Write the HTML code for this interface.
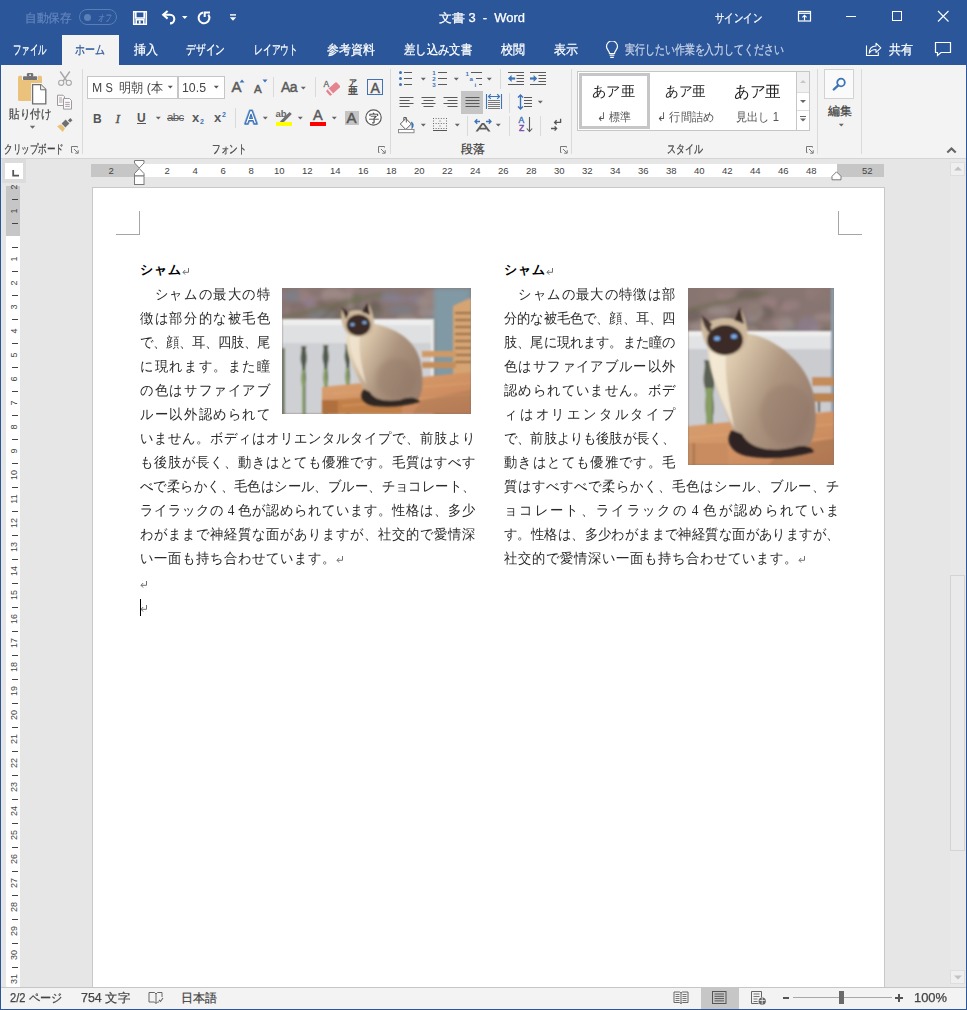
<!DOCTYPE html>
<html><head><meta charset="utf-8">
<style>
*{box-sizing:border-box;margin:0;padding:0}
html,body{width:967px;height:1010px;overflow:hidden;background:#e6e6e6;font-family:"Liberation Sans",sans-serif;color:#444}
.a{position:absolute}
#title{left:0;top:0;width:967px;height:65px;background:#2b579a}
#ribbon{left:0;top:65px;width:967px;height:94px;background:#f3f3f3;border-bottom:1px solid #d4d4d4}
.wt{color:#fff;font-size:12px;white-space:nowrap;line-height:14px}
.tab{color:#fff;font-size:12.5px;white-space:nowrap;line-height:14px;top:43px}
.lbl{font-size:12px;color:#444;white-space:nowrap;line-height:14px;top:142px}
.sep{background:#dadada;width:1px}
#page{left:92px;top:187px;width:793px;height:900px;background:#fff;border:1px solid #c6c6c6}
#status{left:0;top:987px;width:967px;height:23px;background:#f3f3f3;border-top:1px solid #c6c6c6}
.st{font-size:12px;color:#444;white-space:nowrap;line-height:14px;top:991px}
#bl{left:0;top:0;width:1px;height:1010px;background:#2b579a}
#br{left:966px;top:0;width:1px;height:1010px;background:#2b579a}
#bb{left:0;top:1009px;width:967px;height:1px;background:#2b579a}
.doc{font-family:"Liberation Serif",serif;font-size:13.6px;color:#222;white-space:nowrap;line-height:16px}
.rn{width:20px;text-align:center;font-size:9.5px;line-height:11px;color:#444}
.vn{width:20px;height:12px;text-align:center;font-size:9px;line-height:12px;color:#444;transform:rotate(-90deg)}
.dc{width:14px;text-align:center;font-family:"Liberation Serif",serif;font-size:14px;line-height:16px;color:#2a2a2a;white-space:nowrap;transform:scaleX(0.95)}
.dt{font-family:"Liberation Serif",serif;font-size:13px;line-height:16px;color:#000;font-weight:bold;letter-spacing:1px;white-space:nowrap}
.lbl,.tab,.wt,.st{-webkit-text-stroke:0.25px currentColor}
</style></head><body>
<div id="title" class="a"></div>
<div id="ribbon" class="a"></div>

<!-- title bar -->
<div class="a wt fit" style="left:24.5px;top:10.5px;color:#6283bb;--w:46.5px;transform-origin:0 0;transform:scaleX(0.9688)">自動保存</div>
<div class="a" style="left:79px;top:9px;width:38px;height:16px;border:1px solid #5a7db5;border-radius:8px"></div>
<div class="a" style="left:83.5px;top:13.5px;width:7px;height:7px;border-radius:4px;background:#5c7fb8"></div>
<div class="a fit" style="left:97.5px;top:12.5px;font-size:9.5px;line-height:10px;color:#6283bb;--w:13px;font-style:italic;-webkit-text-stroke:0.2px #6283bb;transform-origin:0 0;transform:scaleX(0.6500)">オフ</div>
<svg class="a" style="left:132px;top:10px" width="16" height="16" viewBox="0 0 16 16"><path d="M1.75 1.75h12.5v12.5H1.75z" fill="none" stroke="#fff" stroke-width="1.6"/><path d="M3.8 1.8v6.2h8.4V1.8" fill="none" stroke="#fff" stroke-width="1.6"/><path d="M4.2 14.2v-4.6h7.6v4.6" fill="none" stroke="#fff" stroke-width="1.6"/><rect x="6.8" y="10.6" width="1.8" height="3" fill="#fff"/></svg>
<svg class="a" style="left:161px;top:10px" width="16" height="15" viewBox="0 0 16 15"><path d="M2.2 4.8H9a4.3 4.3 0 0 1 0 8.6" fill="none" stroke="#fff" stroke-width="2.1"/><path d="M6.6 1L2.2 4.8l4.4 3.8" fill="none" stroke="#fff" stroke-width="2.1"/></svg>
<svg class="a" style="left:182px;top:15px" width="6" height="5" viewBox="0 0 6 5"><path d="M0 1h5.5L2.75 4z" fill="#fff"/></svg>
<svg class="a" style="left:196px;top:10px" width="16" height="15" viewBox="0 0 16 15"><path d="M7.2 2.5A5.4 5.4 0 1 0 12.3 4.6" fill="none" stroke="#fff" stroke-width="2"/><path d="M8.7 7V2.5H14" fill="none" stroke="#fff" stroke-width="2"/></svg>
<svg class="a" style="left:229px;top:13px" width="8" height="9" viewBox="0 0 8 9"><rect x="1" y="1.2" width="6" height="1.4" fill="#fff"/><path d="M0.8 4.2h6.4L4 7.8z" fill="#fff"/></svg>
<div class="a wt fit" style="left:439px;top:11px;--w:86px;transform-origin:0 0;transform:scaleX(1.0777)">文書 3&nbsp; - &nbsp;Word</div>
<div class="a wt fit" style="left:715px;top:11px;--w:47px;transform-origin:0 0;transform:scaleX(0.7833)">サインイン</div>
<svg class="a" style="left:797px;top:10px" width="15" height="12" viewBox="0 0 15 12"><rect x="1.5" y="1.5" width="12" height="9.5" fill="none" stroke="#fff" stroke-width="1.2"/><path d="M1.5 3.3h12" stroke="#fff" stroke-width="1.2"/><path d="M7.5 10.5V5.6M5.4 7.4l2.1-2 2.1 2" fill="none" stroke="#fff" stroke-width="1.2"/></svg>
<div class="a" style="left:846px;top:16px;width:10px;height:1px;background:#fff"></div>
<div class="a" style="left:892px;top:11px;width:10px;height:10px;border:1px solid #fff"></div>
<svg class="a" style="left:937px;top:10px" width="12" height="12" viewBox="0 0 12 12"><path d="M1 1l10.5 10.5M11.5 1L1 11.5" stroke="#fff" stroke-width="1.1"/></svg>
<!-- tabs -->
<div class="a" style="left:62px;top:35px;width:57px;height:30px;background:#f3f3f3"></div>
<div class="a tab fit" style="left:13px;--w:34px;transform-origin:0 0;transform:scaleX(0.6538)">ファイル</div>
<div class="a tab fit" style="left:75px;color:#2b579a;--w:30px;transform-origin:0 0;transform:scaleX(0.7692)">ホーム</div>
<div class="a tab fit" style="left:134px;--w:24px;transform-origin:0 0;transform:scaleX(0.9231)">挿入</div>
<div class="a tab fit" style="left:186px;--w:39px;transform-origin:0 0;transform:scaleX(0.7500)">デザイン</div>
<div class="a tab fit" style="left:254px;--w:44px;transform-origin:0 0;transform:scaleX(0.6769)">レイアウト</div>
<div class="a tab fit" style="left:327px;--w:48px;transform-origin:0 0;transform:scaleX(0.9231)">参考資料</div>
<div class="a tab fit" style="left:404px;--w:68px;transform-origin:0 0;transform:scaleX(0.8718)">差し込み文書</div>
<div class="a tab fit" style="left:501px;--w:24px;transform-origin:0 0;transform:scaleX(0.9231)">校閲</div>
<div class="a tab fit" style="left:554px;--w:24px;transform-origin:0 0;transform:scaleX(0.9231)">表示</div>
<svg class="a" style="left:605px;top:41px" width="14" height="18" viewBox="0 0 14 18"><path d="M4.5 12.5C4.5 10 1.5 8.5 1.5 5.5a5.5 5.5 0 0 1 11 0c0 3-3 4.5-3 7z" fill="none" stroke="#fff" stroke-width="1.2"/><path d="M4.6 14.2h4.8M5.2 16.3h3.6" stroke="#fff" stroke-width="1.2"/></svg>
<div class="a tab fit" style="left:625px;color:#c8d3e6;--w:159px;transform-origin:0 0;transform:scaleX(0.7644)">実行したい作業を入力してください</div>
<svg class="a" style="left:865px;top:41px" width="17" height="16" viewBox="0 0 17 16"><path d="M1.5 4.5v10h11.8v-3.2" fill="none" stroke="#fff" stroke-width="1.1"/><path d="M4.2 12.2C4.3 8 6.6 5.3 11 5.1V2.2l4.8 4.6-4.8 4.6V8.5C7.8 8.5 5.6 9.8 4.2 12.2z" fill="none" stroke="#fff" stroke-width="1.05" stroke-linejoin="round"/></svg>
<div class="a tab fit" style="left:889px;--w:24px;transform-origin:0 0;transform:scaleX(0.9231)">共有</div>
<svg class="a" style="left:934px;top:41px" width="18" height="16" viewBox="0 0 18 16"><path d="M1.5 1.5h15v10H7l-3.5 3v-3h-2z" fill="none" stroke="#fff" stroke-width="1.2"/></svg>

<!-- ribbon: clipboard -->
<svg class="a" style="left:16px;top:71px" width="32" height="34" viewBox="0 0 32 34">
 <rect x="2" y="4.8" width="24" height="25.2" rx="1.5" fill="#eac27b"/>
 <rect x="6" y="4" width="16" height="5" fill="#f3f3f3"/>
 <rect x="7" y="5.3" width="14.2" height="3.7" rx="0.8" fill="#737373"/>
 <rect x="10.9" y="2" width="6.3" height="4" rx="1.2" fill="#737373"/>
 <rect x="13.3" y="3.4" width="1.6" height="1.6" fill="#f3f3f3"/>
 <rect x="15" y="12" width="16" height="21" fill="#f3f3f3"/>
 <path d="M16.6 13.6h8.2l5 5v14.2H16.6z" fill="#fff" stroke="#6d6d6d" stroke-width="1.3"/>
 <path d="M24.6 13.6v5.2h5.2" fill="#f0f0f0" stroke="#6d6d6d" stroke-width="1"/>
</svg>
<div class="a lbl fit" style="left:9px;top:107px;color:#444;--w:42px;transform-origin:0 0;transform:scaleX(0.8750)">貼り付け</div>
<svg class="a" style="left:29px;top:125px" width="7" height="5" viewBox="0 0 7 5"><path d="M0.8 0.8h5.4L3.5 3.8z" fill="#6a6a6a"/></svg>
<svg class="a" style="left:57px;top:70px" width="16" height="17" viewBox="0 0 16 17">
 <path d="M3.2 1.5l6.6 9.5M12.8 1.5L6.2 11" stroke="#a8a8a8" stroke-width="1.4"/>
 <circle cx="4.2" cy="12.8" r="2.6" fill="none" stroke="#a8a8a8" stroke-width="1.1"/>
 <circle cx="11.8" cy="12.8" r="2.6" fill="none" stroke="#a8a8a8" stroke-width="1.1"/>
</svg>
<svg class="a" style="left:56px;top:94px" width="17" height="16" viewBox="0 0 17 16">
 <path d="M1.5 1.2h5.5l1.5 1.5v8.8H1.5z" fill="#fbf7fa" stroke="#9c9c9c" stroke-width="1"/>
 <path d="M3 4h3M3 6h3.5M3 8h3.5" stroke="#9c9c9c" stroke-width="0.9"/>
 <path d="M7.5 4.5h6l2 2v8.6h-8z" fill="#fbf7fa" stroke="#9c9c9c" stroke-width="1"/>
 <path d="M9.2 8.4h4.6M9.2 10.4h4.6M9.2 12.4h4.6" stroke="#9c9c9c" stroke-width="0.9"/>
</svg>
<svg class="a" style="left:56px;top:117px" width="18" height="16" viewBox="0 0 18 16">
 <path d="M16.5 3.2l-2.2-2.2-2.4 2.4 2.2 2.2z" fill="#707070"/>
 <path d="M13.4 6.4l-3.8-3.8-4 4 3.8 3.8z" fill="#707070"/>
 <path d="M5 7.2l4 4-2.2 3.8L1 9.2z" fill="#eac27b"/>
</svg>
<div class="a lbl fit" style="left:4px;top:142px;--w:60px;transform-origin:0 0;transform:scaleX(0.7143)">クリップボード</div>
<svg class="a" style="left:71px;top:146px" width="8" height="8" viewBox="0 0 8 8"><path d="M0.5 0.5h6v1M0.5 0.5v6h1" fill="none" stroke="#777" stroke-width="1"/><path d="M3 3l3.8 3.8M7.2 4.2v3H4.2" fill="none" stroke="#777" stroke-width="1"/></svg>
<div class="a sep" style="left:82px;top:69px;height:85px"></div>

<!-- font group -->
<div class="a" style="left:87px;top:76px;width:91px;height:23px;background:#fff;border:1px solid #c6c6c6"></div>
<div class="a" style="left:178px;top:76px;width:47px;height:23px;background:#fff;border:1px solid #c6c6c6"></div>
<div class="a fit" style="left:91px;top:80px;font-size:13px;line-height:15px;color:#444;white-space:nowrap;--w:72px;transform-origin:0 0;transform:scaleX(0.9404)">ＭＳ 明朝 (本</div>
<svg class="a" style="left:167px;top:85px" width="7" height="5" viewBox="0 0 7 5"><path d="M0.8 0.8h5L3.3 3.5z" fill="#555"/></svg>
<div class="a fit" style="left:182px;top:80px;font-size:13px;line-height:15px;color:#444;white-space:nowrap;--w:24px;transform-origin:0 0;transform:scaleX(0.9481)">10.5</div>
<svg class="a" style="left:213px;top:85px" width="7" height="5" viewBox="0 0 7 5"><path d="M0.8 0.8h5L3.3 3.5z" fill="#555"/></svg>
<div class="a" style="left:231.5px;top:79px;font-size:15px;line-height:16px;color:#5a5a5a;-webkit-text-stroke:0.5px #5a5a5a">A</div>
<svg class="a" style="left:239px;top:79px" width="6" height="4" viewBox="0 0 6 4"><path d="M0.5 3.5L3 0.5l2.5 3z" fill="#3c74b8"/></svg>
<div class="a" style="left:254px;top:83px;font-size:11.5px;line-height:12px;color:#5a5a5a;-webkit-text-stroke:0.5px #5a5a5a">A</div>
<svg class="a" style="left:262px;top:79px" width="6" height="4" viewBox="0 0 6 4"><path d="M0.5 0.5h5L3 3.5z" fill="#3c74b8"/></svg>
<div class="a sep" style="left:273px;top:77px;height:20px"></div>
<div class="a" style="left:281px;top:80px;font-size:14px;line-height:15px;color:#5a5a5a;letter-spacing:-0.5px;-webkit-text-stroke:0.45px #5a5a5a">Aa</div>
<svg class="a" style="left:300px;top:86px" width="7" height="5" viewBox="0 0 7 5"><path d="M0.8 0.8h5L3.3 3.5z" fill="#666"/></svg>
<div class="a sep" style="left:315px;top:77px;height:20px"></div>
<svg class="a" style="left:323px;top:79px" width="17" height="17" viewBox="0 0 17 17">
 <text x="0.5" y="7.5" font-family="Liberation Sans" font-size="8.5" fill="#6a6a6a" stroke="#6a6a6a" stroke-width="0.3">A</text>
 <g transform="rotate(-42 10 10)"><rect x="3.2" y="6.8" width="14" height="6.6" rx="1.2" fill="#e5838f"/><rect x="5.6" y="6.8" width="1.6" height="6.6" fill="#f3f3f3"/></g>
</svg>
<div class="a fit" style="left:349px;top:79px;font-size:8px;line-height:8px;color:#444;--w:8px;-webkit-text-stroke:0.35px #444;transform-origin:0 0;transform:scaleX(1.0000)">ア</div>
<div class="a fit" style="left:348px;top:86px;font-size:10px;line-height:10px;color:#444;--w:10px;-webkit-text-stroke:0.35px #444;transform-origin:0 0;transform:scaleX(1.0000)">亜</div>
<div class="a" style="left:367px;top:79px;width:16px;height:16px;border:1.4px solid #3f73b5"></div>
<div class="a" style="left:370.5px;top:80.5px;font-size:14px;line-height:14px;color:#555;-webkit-text-stroke:0.45px #555">A</div>
<div class="a" style="left:93px;top:112.5px;font-size:12px;line-height:13px;font-weight:bold;color:#555">B</div>
<div class="a" style="left:115.5px;top:111.5px;font-size:13.5px;line-height:13px;font-style:italic;color:#555;font-family:'Liberation Serif',serif;-webkit-text-stroke:0.35px #555">I</div>
<div class="a" style="left:137px;top:112px;font-size:12px;line-height:13px;font-weight:bold;color:#555">U</div>
<div class="a" style="left:137px;top:123px;width:9px;height:1.2px;background:#555"></div>
<svg class="a" style="left:155px;top:116px" width="7" height="5" viewBox="0 0 7 5"><path d="M0.8 0.8h5L3.3 3.5z" fill="#666"/></svg>
<div class="a" style="left:167px;top:111px;font-size:11.5px;line-height:13px;color:#5a5a5a;letter-spacing:-0.6px">abc</div>
<div class="a" style="left:167px;top:117.5px;width:17px;height:1.2px;background:#5a5a5a"></div>
<div class="a" style="left:192px;top:111px;font-size:13px;line-height:13px;font-weight:bold;color:#5a5a5a">x</div>
<div class="a" style="left:200px;top:118px;font-size:7px;line-height:7px;font-weight:bold;color:#3c74b8">2</div>
<div class="a" style="left:214px;top:111px;font-size:13px;line-height:13px;font-weight:bold;color:#5a5a5a">x</div>
<div class="a" style="left:222px;top:111px;font-size:7px;line-height:7px;font-weight:bold;color:#3c74b8">2</div>
<div class="a sep" style="left:235px;top:108px;height:20px"></div>
<svg class="a" style="left:243px;top:109px" width="16" height="17" viewBox="0 0 16 17">
 <path d="M2.2 14.8L6.9 1.6h2.2l4.7 13.2h-2.6l-1.1-3.2H5.9l-1.1 3.2zM6.6 9.5h2.8L8 5.2z" fill="#fff" stroke="#8ab0dc" stroke-width="2.6" stroke-linejoin="round"/>
 <path d="M2.2 14.8L6.9 1.6h2.2l4.7 13.2h-2.6l-1.1-3.2H5.9l-1.1 3.2zM6.6 9.5h2.8L8 5.2z" fill="#fff" stroke="#3f73b8" stroke-width="1.2" stroke-linejoin="round"/>
</svg>
<svg class="a" style="left:262px;top:116px" width="7" height="5" viewBox="0 0 7 5"><path d="M0.8 0.8h5L3.3 3.5z" fill="#666"/></svg>
<svg class="a" style="left:275px;top:108px" width="18" height="19" viewBox="0 0 18 19">
 <text x="0.5" y="8.5" font-family="Liberation Sans" font-size="9.5" font-weight="bold" fill="#666">ab</text>
 <path d="M5 13.5l9.6-9.6 2.2 2.2-9.6 9.6z" fill="#6f6f6f"/><path d="M5 13.5l-1 2 2.2-0.2z" fill="#6f6f6f"/>
 <rect x="1" y="14" width="16" height="4" fill="#ffff00"/>
</svg>
<svg class="a" style="left:297px;top:116px" width="7" height="5" viewBox="0 0 7 5"><path d="M0.8 0.8h5L3.3 3.5z" fill="#666"/></svg>
<div class="a" style="left:313px;top:108px;font-size:14.5px;line-height:15px;color:#5a5a5a;-webkit-text-stroke:0.45px #5a5a5a">A</div>
<div class="a" style="left:310px;top:122px;width:16px;height:4px;background:#f00"></div>
<svg class="a" style="left:331px;top:116px" width="7" height="5" viewBox="0 0 7 5"><path d="M0.8 0.8h5L3.3 3.5z" fill="#666"/></svg>
<div class="a" style="left:345px;top:111px;width:14px;height:14px;background:#c4c4c4"></div>
<div class="a" style="left:346.5px;top:110px;font-size:15px;line-height:15px;color:#555;-webkit-text-stroke:0.45px #555">A</div>
<svg class="a" style="left:365px;top:109px" width="18" height="18" viewBox="0 0 18 18"><circle cx="8.5" cy="8.5" r="7.7" fill="#fff" stroke="#5a5a5a" stroke-width="1.2"/></svg>
<div class="a fit" style="left:368.5px;top:112.5px;font-size:10.5px;line-height:11px;color:#444;--w:10px;-webkit-text-stroke:0.3px #444;transform-origin:0 0;transform:scaleX(0.9091)">字</div>
<div class="a lbl fit" style="left:211.5px;--w:34.5px;transform-origin:0 0;transform:scaleX(0.7188)">フォント</div>
<svg class="a" style="left:378px;top:146px" width="8" height="8" viewBox="0 0 8 8"><path d="M0.5 0.5h6v1M0.5 0.5v6h1" fill="none" stroke="#777" stroke-width="1"/><path d="M3 3l3.8 3.8M7.2 4.2v3H4.2" fill="none" stroke="#777" stroke-width="1"/></svg>
<div class="a sep" style="left:390px;top:69px;height:85px"></div>

<!-- paragraph group -->
<svg class="a" style="left:398px;top:70px" width="16" height="17" viewBox="0 0 16 17">
 <circle cx="2.5" cy="2.5" r="1.5" fill="#3c74b8"/><circle cx="2.5" cy="8.5" r="1.5" fill="#3c74b8"/><circle cx="2.5" cy="14.5" r="1.5" fill="#3c74b8"/>
 <path d="M6 2.5h8M6 8.5h8M6 14.5h8" stroke="#5a5a5a" stroke-width="1"/>
</svg>
<svg class="a" style="left:420px;top:77px" width="7" height="5" viewBox="0 0 7 5"><path d="M0.8 0.8h5L3.3 3.5z" fill="#666"/></svg>
<svg class="a" style="left:431px;top:69px" width="17" height="18" viewBox="0 0 17 18">
 <text x="1.2" y="6" font-family="Liberation Sans" font-size="6.2" font-weight="bold" fill="#3c74b8">1</text>
 <text x="1.2" y="12" font-family="Liberation Sans" font-size="6.2" font-weight="bold" fill="#3c74b8">2</text>
 <text x="1.2" y="18" font-family="Liberation Sans" font-size="6.2" font-weight="bold" fill="#3c74b8">3</text>
 <path d="M7 3.5h9M7 9.5h9M7 15.5h9" stroke="#5a5a5a" stroke-width="1"/>
</svg>
<svg class="a" style="left:453px;top:77px" width="7" height="5" viewBox="0 0 7 5"><path d="M0.8 0.8h5L3.3 3.5z" fill="#666"/></svg>
<svg class="a" style="left:465px;top:69px" width="18" height="19" viewBox="0 0 18 19">
 <text x="0.6" y="6.8" font-family="Liberation Sans" font-size="6.2" font-weight="bold" fill="#3c74b8">1</text>
 <text x="4.6" y="12" font-family="Liberation Sans" font-size="6.2" font-weight="bold" fill="#3c74b8">a</text>
 <text x="9.6" y="18.2" font-family="Liberation Sans" font-size="6.2" font-weight="bold" fill="#3c74b8">i</text>
 <path d="M6 3.5h11M11 9.5h6M14 15.5h3" stroke="#5a5a5a" stroke-width="1"/>
</svg>
<svg class="a" style="left:486px;top:77px" width="7" height="5" viewBox="0 0 7 5"><path d="M0.8 0.8h5L3.3 3.5z" fill="#666"/></svg>
<div class="a sep" style="left:500px;top:69px;height:20px"></div>
<svg class="a" style="left:507px;top:71px" width="18" height="16" viewBox="0 0 18 16">
 <path d="M1 1.5h16M9.5 4.5h7.5M9.5 7.5h7.5M9.5 10.5h7.5M1 13.5h16" stroke="#5a5a5a" stroke-width="1"/>
 <path d="M8.2 7.5H2.5" stroke="#3c74b8" stroke-width="2.2"/><path d="M1 7.5l3.6-3.4v6.8z" fill="#3c74b8"/>
</svg>
<svg class="a" style="left:529px;top:71px" width="18" height="16" viewBox="0 0 18 16">
 <path d="M1 1.5h16M9.5 4.5h7.5M9.5 7.5h7.5M9.5 10.5h7.5M1 13.5h16" stroke="#5a5a5a" stroke-width="1"/>
 <path d="M1 7.5h5.7" stroke="#3c74b8" stroke-width="2.2"/><path d="M8.2 7.5l-3.6-3.4v6.8z" fill="#3c74b8"/>
</svg>
<svg class="a" style="left:399px;top:96px" width="16" height="12" viewBox="0 0 16 12"><path d="M0.5 1.5h14M0.5 4.5h10M0.5 7.5h14M0.5 10.5h10" stroke="#5a5a5a" stroke-width="1.1"/></svg>
<svg class="a" style="left:421px;top:96px" width="16" height="12" viewBox="0 0 16 12"><path d="M0.5 1.5h14M2.5 4.5h10M0.5 7.5h14M2.5 10.5h10" stroke="#5a5a5a" stroke-width="1.1"/></svg>
<svg class="a" style="left:443px;top:96px" width="16" height="12" viewBox="0 0 16 12"><path d="M0.5 1.5h14M4.5 4.5h10M0.5 7.5h14M4.5 10.5h10" stroke="#5a5a5a" stroke-width="1.1"/></svg>
<div class="a" style="left:461px;top:91px;width:22px;height:23px;background:#c5c5c5"></div>
<svg class="a" style="left:465px;top:96px" width="16" height="12" viewBox="0 0 16 12"><path d="M0.5 1.5h14M0.5 4.5h14M0.5 7.5h14M0.5 10.5h14" stroke="#5a5a5a" stroke-width="1.1"/></svg>
<svg class="a" style="left:485px;top:93px" width="18" height="17" viewBox="0 0 18 17">
 <path d="M1.5 1v15M16.5 1v15" stroke="#3c74b8" stroke-width="1.1"/>
 <path d="M3.5 3.5h11M5.8 1.2L3.5 3.5l2.3 2.3M12.2 1.2l2.3 2.3-2.3 2.3" fill="none" stroke="#3c74b8" stroke-width="1.2"/>
 <path d="M3 7.5h12M3 9.5h12M3 11.5h12M3 13.5h12M3 15.5h12" stroke="#5a5a5a" stroke-width="0.8"/>
</svg>
<div class="a sep" style="left:509px;top:93px;height:20px"></div>
<svg class="a" style="left:516px;top:93px" width="18" height="18" viewBox="0 0 18 18">
 <path d="M4.5 2v14M2 4.5l2.5-2.5 2.5 2.5M2 13.5l2.5 2.5 2.5-2.5" fill="none" stroke="#3c74b8" stroke-width="1.4"/>
 <path d="M8 4.5h8M8 7.5h8M8 10.5h8M8 13.5h8" stroke="#5a5a5a" stroke-width="1"/>
</svg>
<svg class="a" style="left:537px;top:100px" width="7" height="5" viewBox="0 0 7 5"><path d="M0.8 0.8h5L3.3 3.5z" fill="#666"/></svg>
<svg class="a" style="left:397px;top:115px" width="20" height="19" viewBox="0 0 20 19">
 <path d="M3.3 9l5.5-5.5 5.5 5.5-5.5 5.5z" fill="#fff" stroke="#5a5a5a" stroke-width="1"/>
 <path d="M6.8 5.5V2.5h2.5v5" fill="none" stroke="#5a5a5a" stroke-width="1"/>
 <path d="M14 6.5c2 0.5 3 2.5 2.6 4.6c-0.3 1.5-1.2 2.6-2.2 3.2c0.4-2 0.2-4.5-0.4-7.8z" fill="#3c74b8"/>
 <rect x="1.5" y="14.5" width="15.5" height="3.2" fill="#fff" stroke="#8a8a8a" stroke-width="1"/>
</svg>
<svg class="a" style="left:420px;top:123px" width="7" height="5" viewBox="0 0 7 5"><path d="M0.8 0.8h5L3.3 3.5z" fill="#666"/></svg>
<svg class="a" style="left:433px;top:118px" width="14" height="14" viewBox="0 0 14 14"><rect x="0" y="0" width="1" height="1" fill="#6a6a6a"/><rect x="2.6" y="0" width="1" height="1" fill="#6a6a6a"/><rect x="5.2" y="0" width="1" height="1" fill="#6a6a6a"/><rect x="7.8" y="0" width="1" height="1" fill="#6a6a6a"/><rect x="10.4" y="0" width="1" height="1" fill="#6a6a6a"/><rect x="13" y="0" width="1" height="1" fill="#6a6a6a"/><rect x="0" y="5" width="1" height="1" fill="#6a6a6a"/><rect x="2.6" y="5" width="1" height="1" fill="#6a6a6a"/><rect x="5.2" y="5" width="1" height="1" fill="#6a6a6a"/><rect x="7.8" y="5" width="1" height="1" fill="#6a6a6a"/><rect x="10.4" y="5" width="1" height="1" fill="#6a6a6a"/><rect x="13" y="5" width="1" height="1" fill="#6a6a6a"/><rect x="0" y="10" width="1" height="1" fill="#6a6a6a"/><rect x="2.6" y="10" width="1" height="1" fill="#6a6a6a"/><rect x="5.2" y="10" width="1" height="1" fill="#6a6a6a"/><rect x="7.8" y="10" width="1" height="1" fill="#6a6a6a"/><rect x="10.4" y="10" width="1" height="1" fill="#6a6a6a"/><rect x="13" y="10" width="1" height="1" fill="#6a6a6a"/><rect x="0" y="2.5" width="1" height="1" fill="#6a6a6a"/><rect x="0" y="7.5" width="1" height="1" fill="#6a6a6a"/><rect x="6.5" y="2.5" width="1" height="1" fill="#6a6a6a"/><rect x="6.5" y="7.5" width="1" height="1" fill="#6a6a6a"/><rect x="13" y="2.5" width="1" height="1" fill="#6a6a6a"/><rect x="13" y="7.5" width="1" height="1" fill="#6a6a6a"/><path d="M0 12.5h14" stroke="#555" stroke-width="1"/></svg>
<svg class="a" style="left:454px;top:123px" width="7" height="5" viewBox="0 0 7 5"><path d="M0.8 0.8h5L3.3 3.5z" fill="#666"/></svg>
<div class="a sep" style="left:467px;top:116px;height:20px"></div>
<svg class="a" style="left:473px;top:117px" width="20" height="16" viewBox="0 0 20 16">
 <path d="M2 4.5h5M4.2 2.3L2 4.5l2.2 2.2M13 4.5h5M15.8 2.3L18 4.5l-2.2 2.2" fill="none" stroke="#3c74b8" stroke-width="1.3"/>
 <path d="M2.5 14.5L8.8 6h2.4l6.3 8.5h-2.4l-1.4-2H6.3l-1.4 2zM7.6 10.8h4.8L10 7.6z" fill="#5f5f5f"/>
</svg>
<svg class="a" style="left:495px;top:123px" width="7" height="5" viewBox="0 0 7 5"><path d="M0.8 0.8h5L3.3 3.5z" fill="#666"/></svg>
<div class="a sep" style="left:509px;top:116px;height:20px"></div>
<div class="a" style="left:518.5px;top:116px;font-size:8.5px;line-height:8px;color:#3c74b8;-webkit-text-stroke:0.4px #3c74b8">A</div>
<div class="a" style="left:519px;top:124px;font-size:8.5px;line-height:8px;color:#7b4fb0;-webkit-text-stroke:0.4px #7b4fb0">Z</div>
<svg class="a" style="left:525px;top:116px" width="9" height="17" viewBox="0 0 9 17"><path d="M4.5 1v15M1.8 12.5l2.7 3 2.7-3" fill="none" stroke="#5a5a5a" stroke-width="1.1"/></svg>
<div class="a sep" style="left:540px;top:116px;height:20px"></div>
<svg class="a" style="left:549px;top:118px" width="14" height="14" viewBox="0 0 14 14">
 <path d="M11.6 0.8v3.6H5.6M7.6 2.3L5.6 4.4l2 2.1" fill="none" stroke="#555" stroke-width="1.3"/>
 <path d="M2 10.5h5.6M5.6 8.4l2 2.1-2 2.1" fill="none" stroke="#555" stroke-width="1.3"/>
</svg>
<div class="a lbl fit" style="left:461px;--w:24px;transform-origin:0 0;transform:scaleX(1.0000)">段落</div>
<svg class="a" style="left:560px;top:146px" width="8" height="8" viewBox="0 0 8 8"><path d="M0.5 0.5h6v1M0.5 0.5v6h1" fill="none" stroke="#777" stroke-width="1"/><path d="M3 3l3.8 3.8M7.2 4.2v3H4.2" fill="none" stroke="#777" stroke-width="1"/></svg>
<div class="a sep" style="left:571px;top:69px;height:85px"></div>

<!-- styles -->
<div class="a" style="left:577px;top:71px;width:233px;height:60px;background:#fff;border:1px solid #c6c6c6"></div>
<div class="a" style="left:579px;top:73px;width:71px;height:56px;border:3px solid #c6c6c6"></div>
<div class="a" style="left:796px;top:72px;width:1px;height:58px;background:#c6c6c6"></div>
<div class="a" style="left:797px;top:72px;width:12px;height:20px;background:#f0f0f0"></div>
<div class="a" style="left:797px;top:92px;width:12px;height:1px;background:#dcdcdc"></div>
<div class="a" style="left:797px;top:110px;width:12px;height:1px;background:#dcdcdc"></div>
<svg class="a" style="left:799px;top:79px" width="8" height="5" viewBox="0 0 8 5"><path d="M1 4h6L4 1z" fill="#c6c6c6"/></svg>
<svg class="a" style="left:799px;top:99px" width="8" height="5" viewBox="0 0 8 5"><path d="M1 1h6L4 4z" fill="#666"/></svg>
<svg class="a" style="left:799px;top:115px" width="8" height="8" viewBox="0 0 8 8"><path d="M1 1.5h6" stroke="#666" stroke-width="1"/><path d="M1 3.5h6L4 6.5z" fill="#666"/></svg>
<div class="a fit" style="left:592px;top:84px;font-size:14px;line-height:16px;color:#222;white-space:nowrap;font-family:'Liberation Serif',serif;--w:43px;transform-origin:0 0;transform:scaleX(1.0238)">あア亜</div>
<div class="a fit" style="left:665px;top:84px;font-size:14px;line-height:16px;color:#222;white-space:nowrap;font-family:'Liberation Serif',serif;--w:41px;transform-origin:0 0;transform:scaleX(0.9762)">あア亜</div>
<div class="a fit" style="left:734px;top:83px;font-size:16px;line-height:18px;color:#222;white-space:nowrap;font-family:'Liberation Serif',serif;--w:47px;transform-origin:0 0;transform:scaleX(0.9792)">あア亜</div>
<div class="a fit" style="left:597px;top:110px;font-size:12px;line-height:14px;color:#555;white-space:nowrap;--w:34px;transform-origin:0 0;transform:scaleX(0.9105)">↲ 標準</div>
<div class="a fit" style="left:657px;top:110px;font-size:12px;line-height:14px;color:#555;white-space:nowrap;--w:57px;transform-origin:0 0;transform:scaleX(0.9292)">↲ 行間詰め</div>
<div class="a fit" style="left:736px;top:110px;font-size:12px;line-height:14px;color:#555;white-space:nowrap;--w:43px;transform-origin:0 0;transform:scaleX(0.9345)">見出し 1</div>
<div class="a lbl fit" style="left:667px;--w:36px;transform-origin:0 0;transform:scaleX(0.7500)">スタイル</div>
<svg class="a" style="left:806px;top:146px" width="8" height="8" viewBox="0 0 8 8"><path d="M0.5 0.5h6v1M0.5 0.5v6h1" fill="none" stroke="#777" stroke-width="1"/><path d="M3 3l3.8 3.8M7.2 4.2v3H4.2" fill="none" stroke="#777" stroke-width="1"/></svg>
<div class="a sep" style="left:817px;top:69px;height:85px"></div>

<!-- editing -->
<div class="a" style="left:824px;top:69px;width:30px;height:30px;background:#fafafa;border:1px solid #d2d2d2"></div>
<svg class="a" style="left:832px;top:77px" width="15" height="14" viewBox="0 0 15 14"><circle cx="9" cy="5.5" r="3.8" fill="none" stroke="#3c74b8" stroke-width="1.8"/><path d="M6.2 8.3L1.8 12.5" stroke="#3c74b8" stroke-width="2.4" stroke-linecap="round"/></svg>
<div class="a lbl fit" style="left:828px;top:104px;--w:24px;transform-origin:0 0;transform:scaleX(1.0000)">編集</div>
<svg class="a" style="left:838px;top:123px" width="7" height="5" viewBox="0 0 7 5"><path d="M0.8 0.8h5L3.3 3.5z" fill="#666"/></svg>
<div class="a sep" style="left:861px;top:69px;height:85px"></div>
<svg class="a" style="left:946px;top:146px" width="11" height="8" viewBox="0 0 11 8"><path d="M1.3 6.6l4.2-4.2 4.2 4.2" fill="none" stroke="#666" stroke-width="2.1"/></svg>
<div class="a" style="left:91px;top:164px;width:793px;height:13px;background:#c6c6c6"></div>
<div class="a" style="left:139px;top:164px;width:698px;height:13px;background:#fff"></div>
<div class="a rn" style="left:101.2px;top:165px">2</div>
<div class="a rn" style="left:157.2px;top:165px">2</div>
<div class="a rn" style="left:185.2px;top:165px">4</div>
<div class="a rn" style="left:213.2px;top:165px">6</div>
<div class="a rn" style="left:241.2px;top:165px">8</div>
<div class="a rn" style="left:269.2px;top:165px">10</div>
<div class="a rn" style="left:297.2px;top:165px">12</div>
<div class="a rn" style="left:325.2px;top:165px">14</div>
<div class="a rn" style="left:353.2px;top:165px">16</div>
<div class="a rn" style="left:381.2px;top:165px">18</div>
<div class="a rn" style="left:409.2px;top:165px">20</div>
<div class="a rn" style="left:437.2px;top:165px">22</div>
<div class="a rn" style="left:465.2px;top:165px">24</div>
<div class="a rn" style="left:493.2px;top:165px">26</div>
<div class="a rn" style="left:521.2px;top:165px">28</div>
<div class="a rn" style="left:549.2px;top:165px">30</div>
<div class="a rn" style="left:577.2px;top:165px">32</div>
<div class="a rn" style="left:605.2px;top:165px">34</div>
<div class="a rn" style="left:633.2px;top:165px">36</div>
<div class="a rn" style="left:661.2px;top:165px">38</div>
<div class="a rn" style="left:689.2px;top:165px">40</div>
<div class="a rn" style="left:717.2px;top:165px">42</div>
<div class="a rn" style="left:745.2px;top:165px">44</div>
<div class="a rn" style="left:773.2px;top:165px">46</div>
<div class="a rn" style="left:801.2px;top:165px">48</div>
<div class="a rn" style="left:857.2px;top:165px">52</div>
<svg class="a" style="left:134px;top:160px" width="11" height="27" viewBox="0 0 11 27"><path d="M0.5 0.5h9.5v2.5L5.25 8 0.5 3z" fill="#fff" stroke="#7a7a7a" stroke-width="1"/><path d="M5.25 8.5L10 13.5v2.5H0.5v-2.5z" fill="#fff" stroke="#7a7a7a" stroke-width="1"/><rect x="0.5" y="16" width="9.5" height="8.5" fill="#fff" stroke="#7a7a7a" stroke-width="1"/></svg>
<svg class="a" style="left:831px;top:171px" width="11" height="10" viewBox="0 0 11 10"><path d="M5.5 0.8L10 5.3v3.5H1V5.3z" fill="#fff" stroke="#7a7a7a" stroke-width="1"/></svg>
<div class="a" style="left:2px;top:159px;width:24px;height:24px;background:#dcdcdc"></div>
<div class="a" style="left:5px;top:163px;width:18px;height:16px;background:#fff"></div>
<svg class="a" style="left:11.5px;top:169.5px" width="8" height="7" viewBox="0 0 8 7"><path d="M1.2 0v5.6H7" fill="none" stroke="#555" stroke-width="1.8"/></svg>
<div class="a" style="left:6px;top:186px;width:14px;height:50px;background:#c6c6c6"></div>
<div class="a" style="left:6px;top:236px;width:14px;height:751px;background:#fff"></div>
<div class="a vn" style="left:3.5px;top:180.5px">2</div>
<div class="a vn" style="left:3.5px;top:204.5px">1</div>
<div class="a vn" style="left:3.5px;top:252.5px">1</div>
<div class="a vn" style="left:3.5px;top:276.5px">2</div>
<div class="a vn" style="left:3.5px;top:300.5px">3</div>
<div class="a vn" style="left:3.5px;top:324.5px">4</div>
<div class="a vn" style="left:3.5px;top:348.5px">5</div>
<div class="a vn" style="left:3.5px;top:372.5px">6</div>
<div class="a vn" style="left:3.5px;top:396.5px">7</div>
<div class="a vn" style="left:3.5px;top:420.5px">8</div>
<div class="a vn" style="left:3.5px;top:444.5px">9</div>
<div class="a vn" style="left:3.5px;top:468.5px">10</div>
<div class="a vn" style="left:3.5px;top:492.5px">11</div>
<div class="a vn" style="left:3.5px;top:516.5px">12</div>
<div class="a vn" style="left:3.5px;top:540.5px">13</div>
<div class="a vn" style="left:3.5px;top:564.5px">14</div>
<div class="a vn" style="left:3.5px;top:588.5px">15</div>
<div class="a vn" style="left:3.5px;top:612.5px">16</div>
<div class="a vn" style="left:3.5px;top:636.5px">17</div>
<div class="a vn" style="left:3.5px;top:660.5px">18</div>
<div class="a vn" style="left:3.5px;top:684.5px">19</div>
<div class="a vn" style="left:3.5px;top:708.5px">20</div>
<div class="a vn" style="left:3.5px;top:732.5px">21</div>
<div class="a vn" style="left:3.5px;top:756.5px">22</div>
<div class="a vn" style="left:3.5px;top:780.5px">23</div>
<div class="a vn" style="left:3.5px;top:804.5px">24</div>
<div class="a vn" style="left:3.5px;top:828.5px">25</div>
<div class="a vn" style="left:3.5px;top:852.5px">26</div>
<div class="a vn" style="left:3.5px;top:876.5px">27</div>
<div class="a vn" style="left:3.5px;top:900.5px">28</div>
<div class="a vn" style="left:3.5px;top:924.5px">29</div>
<div class="a vn" style="left:3.5px;top:948.5px">30</div>
<div class="a vn" style="left:3.5px;top:972.5px">31</div>
<div class="a" style="left:12px;top:199px;width:6px;height:1px;background:#444"></div>
<div class="a" style="left:12px;top:223px;width:6px;height:1px;background:#444"></div>
<div class="a" style="left:12px;top:247px;width:6px;height:1px;background:#444"></div>
<div class="a" style="left:12px;top:271px;width:6px;height:1px;background:#444"></div>
<div class="a" style="left:12px;top:295px;width:6px;height:1px;background:#444"></div>
<div class="a" style="left:12px;top:319px;width:6px;height:1px;background:#444"></div>
<div class="a" style="left:12px;top:343px;width:6px;height:1px;background:#444"></div>
<div class="a" style="left:12px;top:367px;width:6px;height:1px;background:#444"></div>
<div class="a" style="left:12px;top:391px;width:6px;height:1px;background:#444"></div>
<div class="a" style="left:12px;top:415px;width:6px;height:1px;background:#444"></div>
<div class="a" style="left:12px;top:439px;width:6px;height:1px;background:#444"></div>
<div class="a" style="left:12px;top:463px;width:6px;height:1px;background:#444"></div>
<div class="a" style="left:12px;top:487px;width:6px;height:1px;background:#444"></div>
<div class="a" style="left:12px;top:511px;width:6px;height:1px;background:#444"></div>
<div class="a" style="left:12px;top:535px;width:6px;height:1px;background:#444"></div>
<div class="a" style="left:12px;top:559px;width:6px;height:1px;background:#444"></div>
<div class="a" style="left:12px;top:583px;width:6px;height:1px;background:#444"></div>
<div class="a" style="left:12px;top:607px;width:6px;height:1px;background:#444"></div>
<div class="a" style="left:12px;top:631px;width:6px;height:1px;background:#444"></div>
<div class="a" style="left:12px;top:655px;width:6px;height:1px;background:#444"></div>
<div class="a" style="left:12px;top:679px;width:6px;height:1px;background:#444"></div>
<div class="a" style="left:12px;top:703px;width:6px;height:1px;background:#444"></div>
<div class="a" style="left:12px;top:727px;width:6px;height:1px;background:#444"></div>
<div class="a" style="left:12px;top:751px;width:6px;height:1px;background:#444"></div>
<div class="a" style="left:12px;top:775px;width:6px;height:1px;background:#444"></div>
<div class="a" style="left:12px;top:799px;width:6px;height:1px;background:#444"></div>
<div class="a" style="left:12px;top:823px;width:6px;height:1px;background:#444"></div>
<div class="a" style="left:12px;top:847px;width:6px;height:1px;background:#444"></div>
<div class="a" style="left:12px;top:871px;width:6px;height:1px;background:#444"></div>
<div class="a" style="left:12px;top:895px;width:6px;height:1px;background:#444"></div>
<div class="a" style="left:12px;top:919px;width:6px;height:1px;background:#444"></div>
<div class="a" style="left:12px;top:943px;width:6px;height:1px;background:#444"></div>
<div class="a" style="left:12px;top:967px;width:6px;height:1px;background:#444"></div>
<div class="a" style="left:92px;top:187px;width:793px;height:830px;background:#fff;border:1px solid #c8c8c8"></div>
<div class="a" style="left:139px;top:211px;width:1px;height:24px;background:#a6a6a6"></div>
<div class="a" style="left:116px;top:234px;width:24px;height:1px;background:#a6a6a6"></div>
<div class="a" style="left:838px;top:211px;width:1px;height:24px;background:#a6a6a6"></div>
<div class="a" style="left:838px;top:234px;width:24px;height:1px;background:#a6a6a6"></div>
<div class="a" style="left:950px;top:159px;width:16px;height:828px;background:#e8e8e8"></div>
<div class="a" style="left:950px;top:162px;width:15px;height:14px;background:#efefef;border:1px solid #dedede"></div>
<svg class="a" style="left:953px;top:165px" width="10" height="7" viewBox="0 0 10 7"><path d="M1 5.5h8L5 1.5z" fill="#c2c2c2"/></svg>
<div class="a" style="left:950px;top:970px;width:15px;height:14px;background:#efefef;border:1px solid #dedede"></div>
<svg class="a" style="left:953px;top:974px" width="10" height="7" viewBox="0 0 10 7"><path d="M1 1.5h8L5 5.5z" fill="#c2c2c2"/></svg>
<div class="a" style="left:950px;top:575px;width:15px;height:276px;background:#eaeaea;border:1px solid #d4d4d4"></div>
<span class="a dc" style="left:154.6px;top:287px">シ</span>
<span class="a dc" style="left:169.2px;top:287px">ャ</span>
<span class="a dc" style="left:183.9px;top:287px">ム</span>
<span class="a dc" style="left:198.5px;top:287px">の</span>
<span class="a dc" style="left:213.1px;top:287px">最</span>
<span class="a dc" style="left:227.8px;top:287px">大</span>
<span class="a dc" style="left:242.4px;top:287px">の</span>
<span class="a dc" style="left:257.0px;top:287px">特</span>
<span class="a dc" style="left:140.0px;top:311px">徴</span>
<span class="a dc" style="left:154.6px;top:311px">は</span>
<span class="a dc" style="left:169.2px;top:311px">部</span>
<span class="a dc" style="left:183.9px;top:311px">分</span>
<span class="a dc" style="left:198.5px;top:311px">的</span>
<span class="a dc" style="left:213.1px;top:311px">な</span>
<span class="a dc" style="left:227.8px;top:311px">被</span>
<span class="a dc" style="left:242.4px;top:311px">毛</span>
<span class="a dc" style="left:257.0px;top:311px">色</span>
<span class="a dc" style="left:140.0px;top:335px">で</span>
<span class="a dc" style="left:153.0px;top:335px">、</span>
<span class="a dc" style="left:166.0px;top:335px">顔</span>
<span class="a dc" style="left:179.0px;top:335px">、</span>
<span class="a dc" style="left:192.0px;top:335px">耳</span>
<span class="a dc" style="left:205.0px;top:335px">、</span>
<span class="a dc" style="left:218.0px;top:335px">四</span>
<span class="a dc" style="left:231.0px;top:335px">肢</span>
<span class="a dc" style="left:244.0px;top:335px">、</span>
<span class="a dc" style="left:257.0px;top:335px">尾</span>
<span class="a dc" style="left:140.0px;top:359px">に</span>
<span class="a dc" style="left:154.6px;top:359px">現</span>
<span class="a dc" style="left:169.2px;top:359px">れ</span>
<span class="a dc" style="left:183.9px;top:359px">ま</span>
<span class="a dc" style="left:198.5px;top:359px">す</span>
<span class="a dc" style="left:213.1px;top:359px">。</span>
<span class="a dc" style="left:227.8px;top:359px">ま</span>
<span class="a dc" style="left:242.4px;top:359px">た</span>
<span class="a dc" style="left:257.0px;top:359px">瞳</span>
<span class="a dc" style="left:140.0px;top:383px">の</span>
<span class="a dc" style="left:154.6px;top:383px">色</span>
<span class="a dc" style="left:169.2px;top:383px">は</span>
<span class="a dc" style="left:183.9px;top:383px">サ</span>
<span class="a dc" style="left:198.5px;top:383px">フ</span>
<span class="a dc" style="left:213.1px;top:383px">ァ</span>
<span class="a dc" style="left:227.8px;top:383px">イ</span>
<span class="a dc" style="left:242.4px;top:383px">ア</span>
<span class="a dc" style="left:257.0px;top:383px">ブ</span>
<span class="a dc" style="left:140.0px;top:407px">ル</span>
<span class="a dc" style="left:154.6px;top:407px">ー</span>
<span class="a dc" style="left:169.2px;top:407px">以</span>
<span class="a dc" style="left:183.9px;top:407px">外</span>
<span class="a dc" style="left:198.5px;top:407px">認</span>
<span class="a dc" style="left:213.1px;top:407px">め</span>
<span class="a dc" style="left:227.8px;top:407px">ら</span>
<span class="a dc" style="left:242.4px;top:407px">れ</span>
<span class="a dc" style="left:257.0px;top:407px">て</span>
<span class="a dc" style="left:140.0px;top:431px">い</span>
<span class="a dc" style="left:154.0px;top:431px">ま</span>
<span class="a dc" style="left:168.0px;top:431px">せ</span>
<span class="a dc" style="left:182.0px;top:431px">ん</span>
<span class="a dc" style="left:196.0px;top:431px">。</span>
<span class="a dc" style="left:210.0px;top:431px">ボ</span>
<span class="a dc" style="left:224.0px;top:431px">デ</span>
<span class="a dc" style="left:238.0px;top:431px">ィ</span>
<span class="a dc" style="left:252.0px;top:431px">は</span>
<span class="a dc" style="left:266.0px;top:431px">オ</span>
<span class="a dc" style="left:280.0px;top:431px">リ</span>
<span class="a dc" style="left:294.0px;top:431px">エ</span>
<span class="a dc" style="left:308.0px;top:431px">ン</span>
<span class="a dc" style="left:322.0px;top:431px">タ</span>
<span class="a dc" style="left:336.0px;top:431px">ル</span>
<span class="a dc" style="left:350.0px;top:431px">タ</span>
<span class="a dc" style="left:364.0px;top:431px">イ</span>
<span class="a dc" style="left:378.0px;top:431px">プ</span>
<span class="a dc" style="left:392.0px;top:431px">で</span>
<span class="a dc" style="left:406.0px;top:431px">、</span>
<span class="a dc" style="left:420.0px;top:431px">前</span>
<span class="a dc" style="left:434.0px;top:431px">肢</span>
<span class="a dc" style="left:448.0px;top:431px">よ</span>
<span class="a dc" style="left:462.0px;top:431px">り</span>
<span class="a dc" style="left:140.0px;top:455px">も</span>
<span class="a dc" style="left:154.0px;top:455px">後</span>
<span class="a dc" style="left:168.0px;top:455px">肢</span>
<span class="a dc" style="left:182.0px;top:455px">が</span>
<span class="a dc" style="left:196.0px;top:455px">長</span>
<span class="a dc" style="left:210.0px;top:455px">く</span>
<span class="a dc" style="left:224.0px;top:455px">、</span>
<span class="a dc" style="left:238.0px;top:455px">動</span>
<span class="a dc" style="left:252.0px;top:455px">き</span>
<span class="a dc" style="left:266.0px;top:455px">は</span>
<span class="a dc" style="left:280.0px;top:455px">と</span>
<span class="a dc" style="left:294.0px;top:455px">て</span>
<span class="a dc" style="left:308.0px;top:455px">も</span>
<span class="a dc" style="left:322.0px;top:455px">優</span>
<span class="a dc" style="left:336.0px;top:455px">雅</span>
<span class="a dc" style="left:350.0px;top:455px">で</span>
<span class="a dc" style="left:364.0px;top:455px">す</span>
<span class="a dc" style="left:378.0px;top:455px">。</span>
<span class="a dc" style="left:392.0px;top:455px">毛</span>
<span class="a dc" style="left:406.0px;top:455px">質</span>
<span class="a dc" style="left:420.0px;top:455px">は</span>
<span class="a dc" style="left:434.0px;top:455px">す</span>
<span class="a dc" style="left:448.0px;top:455px">べ</span>
<span class="a dc" style="left:462.0px;top:455px">す</span>
<span class="a dc" style="left:140.0px;top:479px">べ</span>
<span class="a dc" style="left:153.4px;top:479px">で</span>
<span class="a dc" style="left:166.8px;top:479px">柔</span>
<span class="a dc" style="left:180.2px;top:479px">ら</span>
<span class="a dc" style="left:193.7px;top:479px">か</span>
<span class="a dc" style="left:207.1px;top:479px">く</span>
<span class="a dc" style="left:220.5px;top:479px">、</span>
<span class="a dc" style="left:233.9px;top:479px">毛</span>
<span class="a dc" style="left:247.3px;top:479px">色</span>
<span class="a dc" style="left:260.8px;top:479px">は</span>
<span class="a dc" style="left:274.2px;top:479px">シ</span>
<span class="a dc" style="left:287.6px;top:479px">ー</span>
<span class="a dc" style="left:301.0px;top:479px">ル</span>
<span class="a dc" style="left:314.4px;top:479px">、</span>
<span class="a dc" style="left:327.8px;top:479px">ブ</span>
<span class="a dc" style="left:341.2px;top:479px">ル</span>
<span class="a dc" style="left:354.7px;top:479px">ー</span>
<span class="a dc" style="left:368.1px;top:479px">、</span>
<span class="a dc" style="left:381.5px;top:479px">チ</span>
<span class="a dc" style="left:394.9px;top:479px">ョ</span>
<span class="a dc" style="left:408.3px;top:479px">コ</span>
<span class="a dc" style="left:421.8px;top:479px">レ</span>
<span class="a dc" style="left:435.2px;top:479px">ー</span>
<span class="a dc" style="left:448.6px;top:479px">ト</span>
<span class="a dc" style="left:462.0px;top:479px">、</span>
<span class="a dc" style="left:140.0px;top:503px">ラ</span>
<span class="a dc" style="left:154.0px;top:503px">イ</span>
<span class="a dc" style="left:168.0px;top:503px">ラ</span>
<span class="a dc" style="left:182.0px;top:503px">ッ</span>
<span class="a dc" style="left:196.0px;top:503px">ク</span>
<span class="a dc" style="left:210.0px;top:503px">の</span>
<span class="a dc" style="left:224.0px;top:503px">4</span>
<span class="a dc" style="left:238.0px;top:503px">色</span>
<span class="a dc" style="left:252.0px;top:503px">が</span>
<span class="a dc" style="left:266.0px;top:503px">認</span>
<span class="a dc" style="left:280.0px;top:503px">め</span>
<span class="a dc" style="left:294.0px;top:503px">ら</span>
<span class="a dc" style="left:308.0px;top:503px">れ</span>
<span class="a dc" style="left:322.0px;top:503px">て</span>
<span class="a dc" style="left:336.0px;top:503px">い</span>
<span class="a dc" style="left:350.0px;top:503px">ま</span>
<span class="a dc" style="left:364.0px;top:503px">す</span>
<span class="a dc" style="left:378.0px;top:503px">。</span>
<span class="a dc" style="left:392.0px;top:503px">性</span>
<span class="a dc" style="left:406.0px;top:503px">格</span>
<span class="a dc" style="left:420.0px;top:503px">は</span>
<span class="a dc" style="left:434.0px;top:503px">、</span>
<span class="a dc" style="left:448.0px;top:503px">多</span>
<span class="a dc" style="left:462.0px;top:503px">少</span>
<span class="a dc" style="left:140.0px;top:527px">わ</span>
<span class="a dc" style="left:154.0px;top:527px">が</span>
<span class="a dc" style="left:168.0px;top:527px">ま</span>
<span class="a dc" style="left:182.0px;top:527px">ま</span>
<span class="a dc" style="left:196.0px;top:527px">で</span>
<span class="a dc" style="left:210.0px;top:527px">神</span>
<span class="a dc" style="left:224.0px;top:527px">経</span>
<span class="a dc" style="left:238.0px;top:527px">質</span>
<span class="a dc" style="left:252.0px;top:527px">な</span>
<span class="a dc" style="left:266.0px;top:527px">面</span>
<span class="a dc" style="left:280.0px;top:527px">が</span>
<span class="a dc" style="left:294.0px;top:527px">あ</span>
<span class="a dc" style="left:308.0px;top:527px">り</span>
<span class="a dc" style="left:322.0px;top:527px">ま</span>
<span class="a dc" style="left:336.0px;top:527px">す</span>
<span class="a dc" style="left:350.0px;top:527px">が</span>
<span class="a dc" style="left:364.0px;top:527px">、</span>
<span class="a dc" style="left:378.0px;top:527px">社</span>
<span class="a dc" style="left:392.0px;top:527px">交</span>
<span class="a dc" style="left:406.0px;top:527px">的</span>
<span class="a dc" style="left:420.0px;top:527px">で</span>
<span class="a dc" style="left:434.0px;top:527px">愛</span>
<span class="a dc" style="left:448.0px;top:527px">情</span>
<span class="a dc" style="left:462.0px;top:527px">深</span>
<span class="a dc" style="left:518.4px;top:287px">シ</span>
<span class="a dc" style="left:532.7px;top:287px">ャ</span>
<span class="a dc" style="left:547.1px;top:287px">ム</span>
<span class="a dc" style="left:561.5px;top:287px">の</span>
<span class="a dc" style="left:575.8px;top:287px">最</span>
<span class="a dc" style="left:590.2px;top:287px">大</span>
<span class="a dc" style="left:604.5px;top:287px">の</span>
<span class="a dc" style="left:618.9px;top:287px">特</span>
<span class="a dc" style="left:633.3px;top:287px">徴</span>
<span class="a dc" style="left:647.6px;top:287px">は</span>
<span class="a dc" style="left:662.0px;top:287px">部</span>
<span class="a dc" style="left:504.0px;top:311px">分</span>
<span class="a dc" style="left:517.2px;top:311px">的</span>
<span class="a dc" style="left:530.3px;top:311px">な</span>
<span class="a dc" style="left:543.5px;top:311px">被</span>
<span class="a dc" style="left:556.7px;top:311px">毛</span>
<span class="a dc" style="left:569.8px;top:311px">色</span>
<span class="a dc" style="left:583.0px;top:311px">で</span>
<span class="a dc" style="left:596.2px;top:311px">、</span>
<span class="a dc" style="left:609.3px;top:311px">顔</span>
<span class="a dc" style="left:622.5px;top:311px">、</span>
<span class="a dc" style="left:635.7px;top:311px">耳</span>
<span class="a dc" style="left:648.8px;top:311px">、</span>
<span class="a dc" style="left:662.0px;top:311px">四</span>
<span class="a dc" style="left:504.0px;top:335px">肢</span>
<span class="a dc" style="left:517.2px;top:335px">、</span>
<span class="a dc" style="left:530.3px;top:335px">尾</span>
<span class="a dc" style="left:543.5px;top:335px">に</span>
<span class="a dc" style="left:556.7px;top:335px">現</span>
<span class="a dc" style="left:569.8px;top:335px">れ</span>
<span class="a dc" style="left:583.0px;top:335px">ま</span>
<span class="a dc" style="left:596.2px;top:335px">す</span>
<span class="a dc" style="left:609.3px;top:335px">。</span>
<span class="a dc" style="left:622.5px;top:335px">ま</span>
<span class="a dc" style="left:635.7px;top:335px">た</span>
<span class="a dc" style="left:648.8px;top:335px">瞳</span>
<span class="a dc" style="left:662.0px;top:335px">の</span>
<span class="a dc" style="left:504.0px;top:359px">色</span>
<span class="a dc" style="left:518.4px;top:359px">は</span>
<span class="a dc" style="left:532.7px;top:359px">サ</span>
<span class="a dc" style="left:547.1px;top:359px">フ</span>
<span class="a dc" style="left:561.5px;top:359px">ァ</span>
<span class="a dc" style="left:575.8px;top:359px">イ</span>
<span class="a dc" style="left:590.2px;top:359px">ア</span>
<span class="a dc" style="left:604.5px;top:359px">ブ</span>
<span class="a dc" style="left:618.9px;top:359px">ル</span>
<span class="a dc" style="left:633.3px;top:359px">ー</span>
<span class="a dc" style="left:647.6px;top:359px">以</span>
<span class="a dc" style="left:662.0px;top:359px">外</span>
<span class="a dc" style="left:504.0px;top:383px">認</span>
<span class="a dc" style="left:518.4px;top:383px">め</span>
<span class="a dc" style="left:532.7px;top:383px">ら</span>
<span class="a dc" style="left:547.1px;top:383px">れ</span>
<span class="a dc" style="left:561.5px;top:383px">て</span>
<span class="a dc" style="left:575.8px;top:383px">い</span>
<span class="a dc" style="left:590.2px;top:383px">ま</span>
<span class="a dc" style="left:604.5px;top:383px">せ</span>
<span class="a dc" style="left:618.9px;top:383px">ん</span>
<span class="a dc" style="left:633.3px;top:383px">。</span>
<span class="a dc" style="left:647.6px;top:383px">ボ</span>
<span class="a dc" style="left:662.0px;top:383px">デ</span>
<span class="a dc" style="left:504.0px;top:407px">ィ</span>
<span class="a dc" style="left:519.8px;top:407px">は</span>
<span class="a dc" style="left:535.6px;top:407px">オ</span>
<span class="a dc" style="left:551.4px;top:407px">リ</span>
<span class="a dc" style="left:567.2px;top:407px">エ</span>
<span class="a dc" style="left:583.0px;top:407px">ン</span>
<span class="a dc" style="left:598.8px;top:407px">タ</span>
<span class="a dc" style="left:614.6px;top:407px">ル</span>
<span class="a dc" style="left:630.4px;top:407px">タ</span>
<span class="a dc" style="left:646.2px;top:407px">イ</span>
<span class="a dc" style="left:662.0px;top:407px">プ</span>
<span class="a dc" style="left:504.0px;top:431px">で</span>
<span class="a dc" style="left:517.2px;top:431px">、</span>
<span class="a dc" style="left:530.3px;top:431px">前</span>
<span class="a dc" style="left:543.5px;top:431px">肢</span>
<span class="a dc" style="left:556.7px;top:431px">よ</span>
<span class="a dc" style="left:569.8px;top:431px">り</span>
<span class="a dc" style="left:583.0px;top:431px">も</span>
<span class="a dc" style="left:596.2px;top:431px">後</span>
<span class="a dc" style="left:609.3px;top:431px">肢</span>
<span class="a dc" style="left:622.5px;top:431px">が</span>
<span class="a dc" style="left:635.7px;top:431px">長</span>
<span class="a dc" style="left:648.8px;top:431px">く</span>
<span class="a dc" style="left:662.0px;top:431px">、</span>
<span class="a dc" style="left:504.0px;top:455px">動</span>
<span class="a dc" style="left:518.4px;top:455px">き</span>
<span class="a dc" style="left:532.7px;top:455px">は</span>
<span class="a dc" style="left:547.1px;top:455px">と</span>
<span class="a dc" style="left:561.5px;top:455px">て</span>
<span class="a dc" style="left:575.8px;top:455px">も</span>
<span class="a dc" style="left:590.2px;top:455px">優</span>
<span class="a dc" style="left:604.5px;top:455px">雅</span>
<span class="a dc" style="left:618.9px;top:455px">で</span>
<span class="a dc" style="left:633.3px;top:455px">す</span>
<span class="a dc" style="left:647.6px;top:455px">。</span>
<span class="a dc" style="left:662.0px;top:455px">毛</span>
<span class="a dc" style="left:504.0px;top:479px">質</span>
<span class="a dc" style="left:518.0px;top:479px">は</span>
<span class="a dc" style="left:532.0px;top:479px">す</span>
<span class="a dc" style="left:546.0px;top:479px">べ</span>
<span class="a dc" style="left:560.0px;top:479px">す</span>
<span class="a dc" style="left:574.0px;top:479px">べ</span>
<span class="a dc" style="left:588.0px;top:479px">で</span>
<span class="a dc" style="left:602.0px;top:479px">柔</span>
<span class="a dc" style="left:616.0px;top:479px">ら</span>
<span class="a dc" style="left:630.0px;top:479px">か</span>
<span class="a dc" style="left:644.0px;top:479px">く</span>
<span class="a dc" style="left:658.0px;top:479px">、</span>
<span class="a dc" style="left:672.0px;top:479px">毛</span>
<span class="a dc" style="left:686.0px;top:479px">色</span>
<span class="a dc" style="left:700.0px;top:479px">は</span>
<span class="a dc" style="left:714.0px;top:479px">シ</span>
<span class="a dc" style="left:728.0px;top:479px">ー</span>
<span class="a dc" style="left:742.0px;top:479px">ル</span>
<span class="a dc" style="left:756.0px;top:479px">、</span>
<span class="a dc" style="left:770.0px;top:479px">ブ</span>
<span class="a dc" style="left:784.0px;top:479px">ル</span>
<span class="a dc" style="left:798.0px;top:479px">ー</span>
<span class="a dc" style="left:812.0px;top:479px">、</span>
<span class="a dc" style="left:826.0px;top:479px">チ</span>
<span class="a dc" style="left:504.0px;top:503px">ョ</span>
<span class="a dc" style="left:519.3px;top:503px">コ</span>
<span class="a dc" style="left:534.7px;top:503px">レ</span>
<span class="a dc" style="left:550.0px;top:503px">ー</span>
<span class="a dc" style="left:565.3px;top:503px">ト</span>
<span class="a dc" style="left:580.7px;top:503px">、</span>
<span class="a dc" style="left:596.0px;top:503px">ラ</span>
<span class="a dc" style="left:611.3px;top:503px">イ</span>
<span class="a dc" style="left:626.7px;top:503px">ラ</span>
<span class="a dc" style="left:642.0px;top:503px">ッ</span>
<span class="a dc" style="left:657.3px;top:503px">ク</span>
<span class="a dc" style="left:672.7px;top:503px">の</span>
<span class="a dc" style="left:688.0px;top:503px">4</span>
<span class="a dc" style="left:703.3px;top:503px">色</span>
<span class="a dc" style="left:718.7px;top:503px">が</span>
<span class="a dc" style="left:734.0px;top:503px">認</span>
<span class="a dc" style="left:749.3px;top:503px">め</span>
<span class="a dc" style="left:764.7px;top:503px">ら</span>
<span class="a dc" style="left:780.0px;top:503px">れ</span>
<span class="a dc" style="left:795.3px;top:503px">て</span>
<span class="a dc" style="left:810.7px;top:503px">い</span>
<span class="a dc" style="left:826.0px;top:503px">ま</span>
<span class="a dc" style="left:504.0px;top:527px">す</span>
<span class="a dc" style="left:517.4px;top:527px">。</span>
<span class="a dc" style="left:530.8px;top:527px">性</span>
<span class="a dc" style="left:544.2px;top:527px">格</span>
<span class="a dc" style="left:557.7px;top:527px">は</span>
<span class="a dc" style="left:571.1px;top:527px">、</span>
<span class="a dc" style="left:584.5px;top:527px">多</span>
<span class="a dc" style="left:597.9px;top:527px">少</span>
<span class="a dc" style="left:611.3px;top:527px">わ</span>
<span class="a dc" style="left:624.8px;top:527px">が</span>
<span class="a dc" style="left:638.2px;top:527px">ま</span>
<span class="a dc" style="left:651.6px;top:527px">ま</span>
<span class="a dc" style="left:665.0px;top:527px">で</span>
<span class="a dc" style="left:678.4px;top:527px">神</span>
<span class="a dc" style="left:691.8px;top:527px">経</span>
<span class="a dc" style="left:705.2px;top:527px">質</span>
<span class="a dc" style="left:718.7px;top:527px">な</span>
<span class="a dc" style="left:732.1px;top:527px">面</span>
<span class="a dc" style="left:745.5px;top:527px">が</span>
<span class="a dc" style="left:758.9px;top:527px">あ</span>
<span class="a dc" style="left:772.3px;top:527px">り</span>
<span class="a dc" style="left:785.8px;top:527px">ま</span>
<span class="a dc" style="left:799.2px;top:527px">す</span>
<span class="a dc" style="left:812.6px;top:527px">が</span>
<span class="a dc" style="left:826.0px;top:527px">、</span>
<span class="a dc" style="left:140.0px;top:551px">い</span>
<span class="a dc" style="left:154.0px;top:551px">一</span>
<span class="a dc" style="left:168.0px;top:551px">面</span>
<span class="a dc" style="left:182.0px;top:551px">も</span>
<span class="a dc" style="left:196.0px;top:551px">持</span>
<span class="a dc" style="left:210.0px;top:551px">ち</span>
<span class="a dc" style="left:224.0px;top:551px">合</span>
<span class="a dc" style="left:238.0px;top:551px">わ</span>
<span class="a dc" style="left:252.0px;top:551px">せ</span>
<span class="a dc" style="left:266.0px;top:551px">て</span>
<span class="a dc" style="left:280.0px;top:551px">い</span>
<span class="a dc" style="left:294.0px;top:551px">ま</span>
<span class="a dc" style="left:308.0px;top:551px">す</span>
<span class="a dc" style="left:322.0px;top:551px">。</span>
<span class="a dc" style="left:504.0px;top:551px">社</span>
<span class="a dc" style="left:518.0px;top:551px">交</span>
<span class="a dc" style="left:532.0px;top:551px">的</span>
<span class="a dc" style="left:546.0px;top:551px">で</span>
<span class="a dc" style="left:560.0px;top:551px">愛</span>
<span class="a dc" style="left:574.0px;top:551px">情</span>
<span class="a dc" style="left:588.0px;top:551px">深</span>
<span class="a dc" style="left:602.0px;top:551px">い</span>
<span class="a dc" style="left:616.0px;top:551px">一</span>
<span class="a dc" style="left:630.0px;top:551px">面</span>
<span class="a dc" style="left:644.0px;top:551px">も</span>
<span class="a dc" style="left:658.0px;top:551px">持</span>
<span class="a dc" style="left:672.0px;top:551px">ち</span>
<span class="a dc" style="left:686.0px;top:551px">合</span>
<span class="a dc" style="left:700.0px;top:551px">わ</span>
<span class="a dc" style="left:714.0px;top:551px">せ</span>
<span class="a dc" style="left:728.0px;top:551px">て</span>
<span class="a dc" style="left:742.0px;top:551px">い</span>
<span class="a dc" style="left:756.0px;top:551px">ま</span>
<span class="a dc" style="left:770.0px;top:551px">す</span>
<span class="a dc" style="left:784.0px;top:551px">。</span>
<svg class="a" style="left:336px;top:555px" width="8" height="9" viewBox="0 0 8 9"><path d="M6.5 1v4.3H1M3.2 3l-2.2 2.3 2.2 2.3" fill="none" stroke="#707070" stroke-width="1"/></svg>
<svg class="a" style="left:798px;top:555px" width="8" height="9" viewBox="0 0 8 9"><path d="M6.5 1v4.3H1M3.2 3l-2.2 2.3 2.2 2.3" fill="none" stroke="#707070" stroke-width="1"/></svg>
<span class="a dt" style="left:140px;top:262px">シャム</span>
<span class="a dt" style="left:504px;top:262px">シャム</span>
<svg class="a" style="left:181.5px;top:267px" width="8" height="9" viewBox="0 0 8 9"><path d="M6.5 1v4.3H1M3.2 3l-2.2 2.3 2.2 2.3" fill="none" stroke="#707070" stroke-width="1"/></svg>
<svg class="a" style="left:545.5px;top:267px" width="8" height="9" viewBox="0 0 8 9"><path d="M6.5 1v4.3H1M3.2 3l-2.2 2.3 2.2 2.3" fill="none" stroke="#707070" stroke-width="1"/></svg>
<svg class="a" style="left:140px;top:580px" width="8" height="9" viewBox="0 0 8 9"><path d="M6.5 1v4.3H1M3.2 3l-2.2 2.3 2.2 2.3" fill="none" stroke="#707070" stroke-width="1"/></svg>
<svg class="a" style="left:140px;top:604px" width="8" height="9" viewBox="0 0 8 9"><path d="M6.5 1v4.3H1M3.2 3l-2.2 2.3 2.2 2.3" fill="none" stroke="#707070" stroke-width="1"/></svg>
<div class="a" style="left:140px;top:599px;width:1.2px;height:17px;background:#000"></div>
<svg class="a" style="left:282px;top:288px" width="189" height="126" viewBox="0 0 189 126">
<defs>
 <filter id="b1" x="-10%" y="-10%" width="120%" height="120%"><feGaussianBlur stdDeviation="2.2"/></filter>
 <filter id="b2" x="-10%" y="-10%" width="120%" height="120%"><feGaussianBlur stdDeviation="0.9"/></filter>
 <filter id="b3" x="-10%" y="-10%" width="120%" height="120%"><feGaussianBlur stdDeviation="0.8"/></filter>
 <linearGradient id="wood1" x1="0" y1="0" x2="1" y2="1"><stop offset="0" stop-color="#dca472"/><stop offset="0.6" stop-color="#d09062"/><stop offset="1" stop-color="#c08058"/></linearGradient>
 <linearGradient id="body1" x1="0" y1="0" x2="1" y2="0.5"><stop offset="0" stop-color="#f0e4ce"/><stop offset="0.3" stop-color="#d8c4a8"/><stop offset="0.65" stop-color="#ab937e"/><stop offset="1" stop-color="#9a806e"/></linearGradient>
</defs>
<rect width="189" height="126" fill="#877572"/>
<g filter="url(#b1)">
 <rect x="0" y="0" width="189" height="40" fill="#877572"/><ellipse cx="50" cy="6" rx="11" ry="3" fill="#9d8f8a" opacity="0.7"/><ellipse cx="15" cy="22" rx="13" ry="4" fill="#9a8080" opacity="0.7"/><ellipse cx="67" cy="3" rx="5" ry="6" fill="#9a8080" opacity="0.7"/><ellipse cx="147" cy="24" rx="10" ry="3" fill="#8a7d90" opacity="0.7"/><ellipse cx="8" cy="8" rx="10" ry="4" fill="#8a7d90" opacity="0.7"/><ellipse cx="22" cy="4" rx="7" ry="8" fill="#8c7872" opacity="0.7"/><ellipse cx="16" cy="22" rx="6" ry="4" fill="#9a8080" opacity="0.7"/><ellipse cx="87" cy="24" rx="9" ry="6" fill="#7a7f86" opacity="0.7"/><ellipse cx="72" cy="35" rx="8" ry="4" fill="#8c7872" opacity="0.7"/><ellipse cx="108" cy="9" rx="10" ry="6" fill="#7a7f86" opacity="0.7"/><ellipse cx="113" cy="11" rx="14" ry="4" fill="#8a7d90" opacity="0.7"/><ellipse cx="26" cy="13" rx="13" ry="6" fill="#9a8080" opacity="0.7"/><ellipse cx="119" cy="22" rx="13" ry="5" fill="#7a7f86" opacity="0.7"/><ellipse cx="92" cy="22" rx="9" ry="8" fill="#6f6a5a" opacity="0.7"/><ellipse cx="73" cy="25" rx="5" ry="7" fill="#6c5e58" opacity="0.7"/><ellipse cx="44" cy="15" rx="11" ry="3" fill="#6c5e58" opacity="0.7"/><ellipse cx="55" cy="23" rx="9" ry="4" fill="#6f6a5a" opacity="0.7"/><ellipse cx="20" cy="9" rx="8" ry="8" fill="#9a8080" opacity="0.7"/><ellipse cx="26" cy="15" rx="7" ry="4" fill="#8a7d90" opacity="0.7"/><ellipse cx="134" cy="11" rx="8" ry="5" fill="#8a7d90" opacity="0.7"/><ellipse cx="148" cy="6" rx="6" ry="4" fill="#a08a86" opacity="0.7"/><ellipse cx="2" cy="32" rx="6" ry="5" fill="#8c7872" opacity="0.7"/><ellipse cx="65" cy="14" rx="10" ry="9" fill="#9d8f8a" opacity="0.7"/><ellipse cx="147" cy="25" rx="11" ry="6" fill="#9d8f8a" opacity="0.7"/><ellipse cx="61" cy="15" rx="5" ry="7" fill="#7d6a66" opacity="0.7"/><ellipse cx="30" cy="37" rx="8" ry="4" fill="#7d6a66" opacity="0.7"/><ellipse cx="16" cy="22" rx="9" ry="9" fill="#7d6a66" opacity="0.7"/><ellipse cx="11" cy="8" rx="8" ry="7" fill="#7a7f86" opacity="0.7"/><ellipse cx="93" cy="18" rx="5" ry="6" fill="#6c5e58" opacity="0.7"/><ellipse cx="74" cy="12" rx="5" ry="7" fill="#6f6a5a" opacity="0.7"/><ellipse cx="74" cy="26" rx="9" ry="4" fill="#9d8f8a" opacity="0.7"/><ellipse cx="56" cy="26" rx="13" ry="8" fill="#6f6a5a" opacity="0.7"/><ellipse cx="152" cy="33" rx="11" ry="5" fill="#7a7f86" opacity="0.7"/><ellipse cx="141" cy="14" rx="6" ry="6" fill="#9d8f8a" opacity="0.7"/><ellipse cx="51" cy="8" rx="12" ry="9" fill="#a08a86" opacity="0.7"/><ellipse cx="125" cy="31" rx="11" ry="4" fill="#9d8f8a" opacity="0.7"/><ellipse cx="76" cy="28" rx="14" ry="8" fill="#6c5e58" opacity="0.7"/><ellipse cx="40" cy="26" rx="14" ry="6" fill="#7a7f86" opacity="0.7"/><ellipse cx="148" cy="14" rx="6" ry="4" fill="#a08a86" opacity="0.7"/><ellipse cx="52" cy="18" rx="14" ry="7" fill="#7d6a66" opacity="0.7"/><path d="M0 30C30 24 60 14 100 6" stroke="#6d7050" stroke-width="3" fill="none"/><path d="M30 40C40 30 50 20 60 14" stroke="#6d6050" stroke-width="2" fill="none"/>
 <rect x="152" y="0" width="37" height="90" fill="#8099a4"/>
</g>
<g filter="url(#b2)">
 <rect x="0" y="31" width="152" height="24" fill="#dfe0e2"/>
 <rect x="0" y="31" width="152" height="6" fill="#eeeeee"/>
 <rect x="0" y="55" width="152" height="71" fill="#cfd0d4"/>
 <path d="M19 58c2 5 -2 10 0.5 18c2 7 -1.5 12 0.5 20v30h3.5v-30c2-8-1.5-13 0.5-20c2.5-8-1.5-13 0.5-18z" fill="#505a4c"/><path d="M19.5 82c1.5 6 -1 11 0.5 17v27h2.5v-27c1.5-6-1-11 0.5-17z" fill="#8aa562"/><path d="M41 57c2 5 -2 10 0.5 18c2 7 -1.5 12 0.5 20v31h3.5v-31c2-8-1.5-13 0.5-20c2.5-8-1.5-13 0.5-18z" fill="#505a4c"/><path d="M41.5 81c1.5 6 -1 11 0.5 17v28h2.5v-28c1.5-6-1-11 0.5-17z" fill="#8aa562"/><path d="M63 56c2 5 -2 10 0.5 18c2 7 -1.5 12 0.5 20v32h3.5v-32c2-8-1.5-13 0.5-20c2.5-8-1.5-13 0.5-18z" fill="#505a4c"/><path d="M63.5 80c1.5 6 -1 11 0.5 17v29h2.5v-29c1.5-6-1-11 0.5-17z" fill="#8aa562"/><rect x="0" y="60" width="3" height="66" fill="#6b7a60"/>
 <rect x="149" y="32" width="3" height="60" fill="#e8e8e8"/>
</g>
<g filter="url(#b2)">
 <path d="M171 18c6-3 12-6 18-8v76h-18z" fill="#d6a472"/>
 <path d="M173 25h16M173 32h16M173 39h16M173 46h16M173 53h16M173 60h16M173 67h16M173 74h16" stroke="#7a5434" stroke-width="1.4"/>
 <rect x="140" y="63" width="34" height="6" fill="#d09a66"/>
 <rect x="140" y="74" width="34" height="6" fill="#c48e5c"/>
 <path d="M40 99L189 84V126H40z" fill="url(#wood1)"/>
 <path d="M40 113L120 106V126H40z" fill="#c28048"/>
 <path d="M50 106L189 95M60 118L189 106" stroke="#e2ae78" stroke-width="1.2" opacity="0.6"/>
 <rect x="40" y="112" width="16" height="14" fill="#b0703e"/>
 <path d="M140 112L189 102V126H130z" fill="#9e7050" opacity="0.35"/>
</g>
<g filter="url(#b3)">
 <path d="M66 44C60 58 70 78 80 98C86 112 110 118 132 115C142 110 142 90 138 72C132 50 112 40 92 36C84 36 72 38 66 44z" fill="url(#body1)"/>
 <path d="M68 48C66 62 74 80 84 96C80 80 76 62 78 46z" fill="#f2e6d2" opacity="0.8"/>
 <ellipse cx="114" cy="90" rx="20" ry="20" fill="#8a7262" opacity="0.3" filter="url(#b1)"/>
 <path d="M82 101C76 108 80 116 92 118C108 120 124 118 138 114C136 110 128 108 118 112C104 114 92 112 88 104z" fill="#2f2521"/>
 <path d="M60 20C58 30 60 40 66 46C72 50 84 50 90 44C94 36 92 26 86 14L81 23C75 21 67 22 64 26z" fill="#cdb89c"/>
 <path d="M59 19L67 25L64 31z" fill="#3a2b26"/>
 <path d="M86 14L80 24L88 27z" fill="#3a2b26"/>
 <ellipse cx="76.5" cy="37" rx="12" ry="10.5" fill="#3b2c27"/>
 <ellipse cx="70.5" cy="36.5" rx="2.2" ry="1.6" fill="#7fb0ea"/>
 <ellipse cx="82.5" cy="34.5" rx="2.2" ry="1.6" fill="#7fb0ea"/>
</g>
</svg>

<svg class="a" style="left:688px;top:288px" width="146" height="177" viewBox="0 0 146 177">
<defs>
 <linearGradient id="wood2" x1="0" y1="0" x2="1" y2="1"><stop offset="0" stop-color="#d9a070"/><stop offset="0.6" stop-color="#cf9062"/><stop offset="1" stop-color="#c08058"/></linearGradient>
 <linearGradient id="body2" x1="0" y1="0" x2="1" y2="0.5"><stop offset="0" stop-color="#f2e8d4"/><stop offset="0.3" stop-color="#d9c6aa"/><stop offset="0.65" stop-color="#ad9580"/><stop offset="1" stop-color="#9a8070"/></linearGradient>
</defs>
<rect width="146" height="177" fill="#877572"/>
<g filter="url(#b1)">
 <ellipse cx="70" cy="29" rx="12" ry="4" fill="#9a8080" opacity="0.7"/><ellipse cx="133" cy="35" rx="12" ry="6" fill="#8c7872" opacity="0.7"/><ellipse cx="63" cy="29" rx="5" ry="9" fill="#8a7d90" opacity="0.7"/><ellipse cx="68" cy="33" rx="5" ry="4" fill="#8c7872" opacity="0.7"/><ellipse cx="4" cy="27" rx="9" ry="7" fill="#6c5e58" opacity="0.7"/><ellipse cx="96" cy="16" rx="9" ry="4" fill="#7d6a66" opacity="0.7"/><ellipse cx="117" cy="33" rx="5" ry="7" fill="#8c7872" opacity="0.7"/><ellipse cx="63" cy="39" rx="12" ry="4" fill="#6f6a5a" opacity="0.7"/><ellipse cx="31" cy="23" rx="12" ry="5" fill="#9d8f8a" opacity="0.7"/><ellipse cx="61" cy="6" rx="13" ry="5" fill="#6c5e58" opacity="0.7"/><ellipse cx="97" cy="37" rx="9" ry="8" fill="#9d8f8a" opacity="0.7"/><ellipse cx="19" cy="7" rx="9" ry="8" fill="#8c7872" opacity="0.7"/><ellipse cx="89" cy="35" rx="5" ry="4" fill="#9a8080" opacity="0.7"/><ellipse cx="81" cy="15" rx="9" ry="6" fill="#9a8080" opacity="0.7"/><ellipse cx="129" cy="3" rx="6" ry="3" fill="#9a8080" opacity="0.7"/><ellipse cx="74" cy="25" rx="12" ry="8" fill="#6c5e58" opacity="0.7"/><ellipse cx="48" cy="44" rx="10" ry="4" fill="#6f6a5a" opacity="0.7"/><ellipse cx="66" cy="24" rx="9" ry="9" fill="#9d8f8a" opacity="0.7"/><ellipse cx="128" cy="42" rx="7" ry="6" fill="#a08a86" opacity="0.7"/><ellipse cx="123" cy="6" rx="5" ry="6" fill="#9a8080" opacity="0.7"/><ellipse cx="98" cy="19" rx="6" ry="5" fill="#9a8080" opacity="0.7"/><ellipse cx="131" cy="7" rx="11" ry="7" fill="#8c7872" opacity="0.7"/><ellipse cx="37" cy="6" rx="9" ry="7" fill="#9a8080" opacity="0.7"/><ellipse cx="58" cy="22" rx="14" ry="8" fill="#8c7872" opacity="0.7"/><ellipse cx="103" cy="45" rx="8" ry="6" fill="#7a7f86" opacity="0.7"/><ellipse cx="47" cy="32" rx="4" ry="6" fill="#6c5e58" opacity="0.7"/><ellipse cx="103" cy="17" rx="9" ry="5" fill="#9a8080" opacity="0.7"/><ellipse cx="16" cy="41" rx="6" ry="8" fill="#9a8080" opacity="0.7"/><ellipse cx="39" cy="2" rx="12" ry="5" fill="#8c7872" opacity="0.7"/><ellipse cx="120" cy="38" rx="11" ry="9" fill="#8a7d90" opacity="0.7"/><ellipse cx="22" cy="41" rx="10" ry="7" fill="#9a8080" opacity="0.7"/><ellipse cx="41" cy="36" rx="6" ry="8" fill="#6f6a5a" opacity="0.7"/><ellipse cx="137" cy="29" rx="12" ry="4" fill="#a08a86" opacity="0.7"/><ellipse cx="10" cy="39" rx="9" ry="5" fill="#9d8f8a" opacity="0.7"/><ellipse cx="61" cy="41" rx="10" ry="3" fill="#a08a86" opacity="0.7"/><ellipse cx="137" cy="44" rx="7" ry="4" fill="#6f6a5a" opacity="0.7"/><path d="M0 22C30 16 50 10 80 4" stroke="#6f6c52" stroke-width="3" fill="none"/>
</g>
<g filter="url(#b2)">
 <rect x="0" y="43" width="143" height="18" fill="#e2e3e5"/>
 <rect x="0" y="43" width="143" height="5" fill="#eeeeee"/>
 <rect x="0" y="61" width="143" height="80" fill="#cbccd0"/>
 <path d="M16 72c3 8 -3 16 1 28c3 10 -2 16 2 28v12h6v-12c3-12-2-18 1-28c3-12-3-20 0-28z" fill="#5a6052"/>
 <path d="M17 100c2 10 -1 16 1 28v12h6v-12c2-12-1-18 1-28z" fill="#869e62"/>
 <rect x="143" y="0" width="3" height="130" fill="#8aa0ae"/>
 <rect x="124" y="89" width="22" height="9" fill="#c48c58"/>
 <rect x="124" y="105" width="22" height="9" fill="#bb8552"/>
 <rect x="130" y="114" width="2" height="10" fill="#4a3b30"/>
 <path d="M0 138L146 123V177H0z" fill="url(#wood2)"/>
 <path d="M0 150L146 136M0 162L146 150" stroke="#e3ae7a" stroke-width="1.2" opacity="0.6"/>
 <rect x="0" y="155" width="40" height="22" fill="#c88c60"/><rect x="5" y="155" width="1.5" height="22" fill="#9a6a48"/>
 <path d="M96 160L146 150V177H80z" fill="#8e6446" opacity="0.35"/>
</g>
<g filter="url(#b3)">
 <path d="M20 56C18 80 32 108 44 140C50 158 80 166 112 164C128 160 130 132 126 108C120 80 100 62 80 52C64 44 34 40 20 56z" fill="url(#body2)"/>
 <path d="M22 62C22 86 34 114 46 140C42 116 36 88 38 62z" fill="#f6ecd8" opacity="0.8"/>
 <ellipse cx="98" cy="126" rx="26" ry="30" fill="#8a7262" opacity="0.3" filter="url(#b1)"/>
 <path d="M44 142C36 152 42 164 58 168C80 172 104 170 126 164C124 158 114 156 104 160C84 164 62 162 54 146z" fill="#2e2420"/>
 <path d="M14 28C12 40 14 52 22 62C30 70 48 70 56 60C62 50 60 34 52 20L46 31C38 29 26 30 20 35z" fill="#cdb89c"/>
 <path d="M13 27L24 36L20 44z" fill="#3a2b26"/>
 <path d="M52 19L46 32L56 36z" fill="#3a2b26"/>
 <ellipse cx="37" cy="52" rx="18" ry="15" fill="#3b2c27"/>
 <path d="M14 30C16 40 20 44 24 46L22 36z" fill="#4a3a32"/>
 <ellipse cx="29" cy="50.5" rx="3" ry="2.2" fill="#78aef0"/>
 <ellipse cx="46" cy="48.5" rx="3" ry="2.2" fill="#78aef0"/>
</g>
</svg>
<div id="status" class="a"></div>
<div class="a st fit" style="left:10px;--w:52px;transform-origin:0 0;transform:scaleX(0.9283)">2/2 ページ</div>
<div class="a st fit" style="left:81px;--w:49px;transform-origin:0 0;transform:scaleX(1.0346)">754 文字</div>
<svg class="a" style="left:148px;top:991px" width="16" height="14" viewBox="0 0 16 14"><path d="M1 1.5h5.5l1.5 1.5v9.5L6.5 11H1z" fill="none" stroke="#666" stroke-width="1"/><path d="M8 3l1.5-1.5H14V6M8 12.5L9.5 11H11" fill="none" stroke="#666" stroke-width="1"/><path d="M11 9l1.5 1.5L15 7" fill="none" stroke="#666" stroke-width="1.1"/></svg>
<div class="a st fit" style="left:181px;--w:36px;transform-origin:0 0;transform:scaleX(1.0000)">日本語</div>
<svg class="a" style="left:673px;top:990px" width="16" height="15" viewBox="0 0 16 15"><path d="M1 2h5.5L8 3l1.5-1H15v10.5H9.5L8 13.5 6.5 12.5H1z" fill="none" stroke="#666" stroke-width="1"/><path d="M8 3v10.5" stroke="#666" stroke-width="1"/><path d="M2.5 4.5h4M2.5 6.5h4M2.5 8.5h4M2.5 10.5h4M9.5 4.5h4M9.5 6.5h4M9.5 8.5h4M9.5 10.5h4" stroke="#666" stroke-width="0.9"/></svg>
<div class="a" style="left:701px;top:988px;width:38px;height:21px;background:#c6c6c6"></div>
<svg class="a" style="left:711px;top:990px" width="17" height="15" viewBox="0 0 17 15"><rect x="1.5" y="1.5" width="13.5" height="12" fill="none" stroke="#555" stroke-width="1"/><path d="M3.5 4h9.5M3.5 6.3h9.5M3.5 8.6h9.5M3.5 10.9h9.5" stroke="#555" stroke-width="1"/></svg>
<svg class="a" style="left:750px;top:990px" width="17" height="16" viewBox="0 0 17 16"><path d="M1.5 1.5h10v6M1.5 1.5v12h7" fill="none" stroke="#666" stroke-width="1"/><path d="M3.5 4h6M3.5 6.5h6M3.5 9h4M3.5 11.5h4" stroke="#666" stroke-width="0.9"/><circle cx="12.2" cy="11.2" r="3.6" fill="#666"/><path d="M9.5 10.5h5.4M12.2 8v6.4" stroke="#f3f3f3" stroke-width="0.8"/></svg>
<div class="a" style="left:783px;top:997px;width:6px;height:2px;background:#555"></div>
<div class="a" style="left:793px;top:997px;width:99px;height:1px;background:#a8a8a8"></div>
<div class="a" style="left:839px;top:991px;width:5px;height:13px;background:#6a6a6a"></div>
<div class="a" style="left:895px;top:997px;width:8px;height:2px;background:#555"></div>
<div class="a" style="left:898px;top:994px;width:2px;height:8px;background:#555"></div>
<div class="a st fit" style="left:914px;--w:33px;transform-origin:0 0;transform:scaleX(1.0748)">100%</div>
<div id="bl" class="a"></div><div id="br" class="a"></div><div id="bb" class="a"></div>
<script>
document.querySelectorAll('.fit').forEach(function(e){var w=parseFloat(getComputedStyle(e).getPropertyValue('--w'));if(!w)return;e.style.transform='none';var r=e.getBoundingClientRect().width;if(r>0){e.style.transformOrigin='0 0';e.style.transform='scaleX('+(w/r).toFixed(4)+')';}});
</script>
</body></html>
